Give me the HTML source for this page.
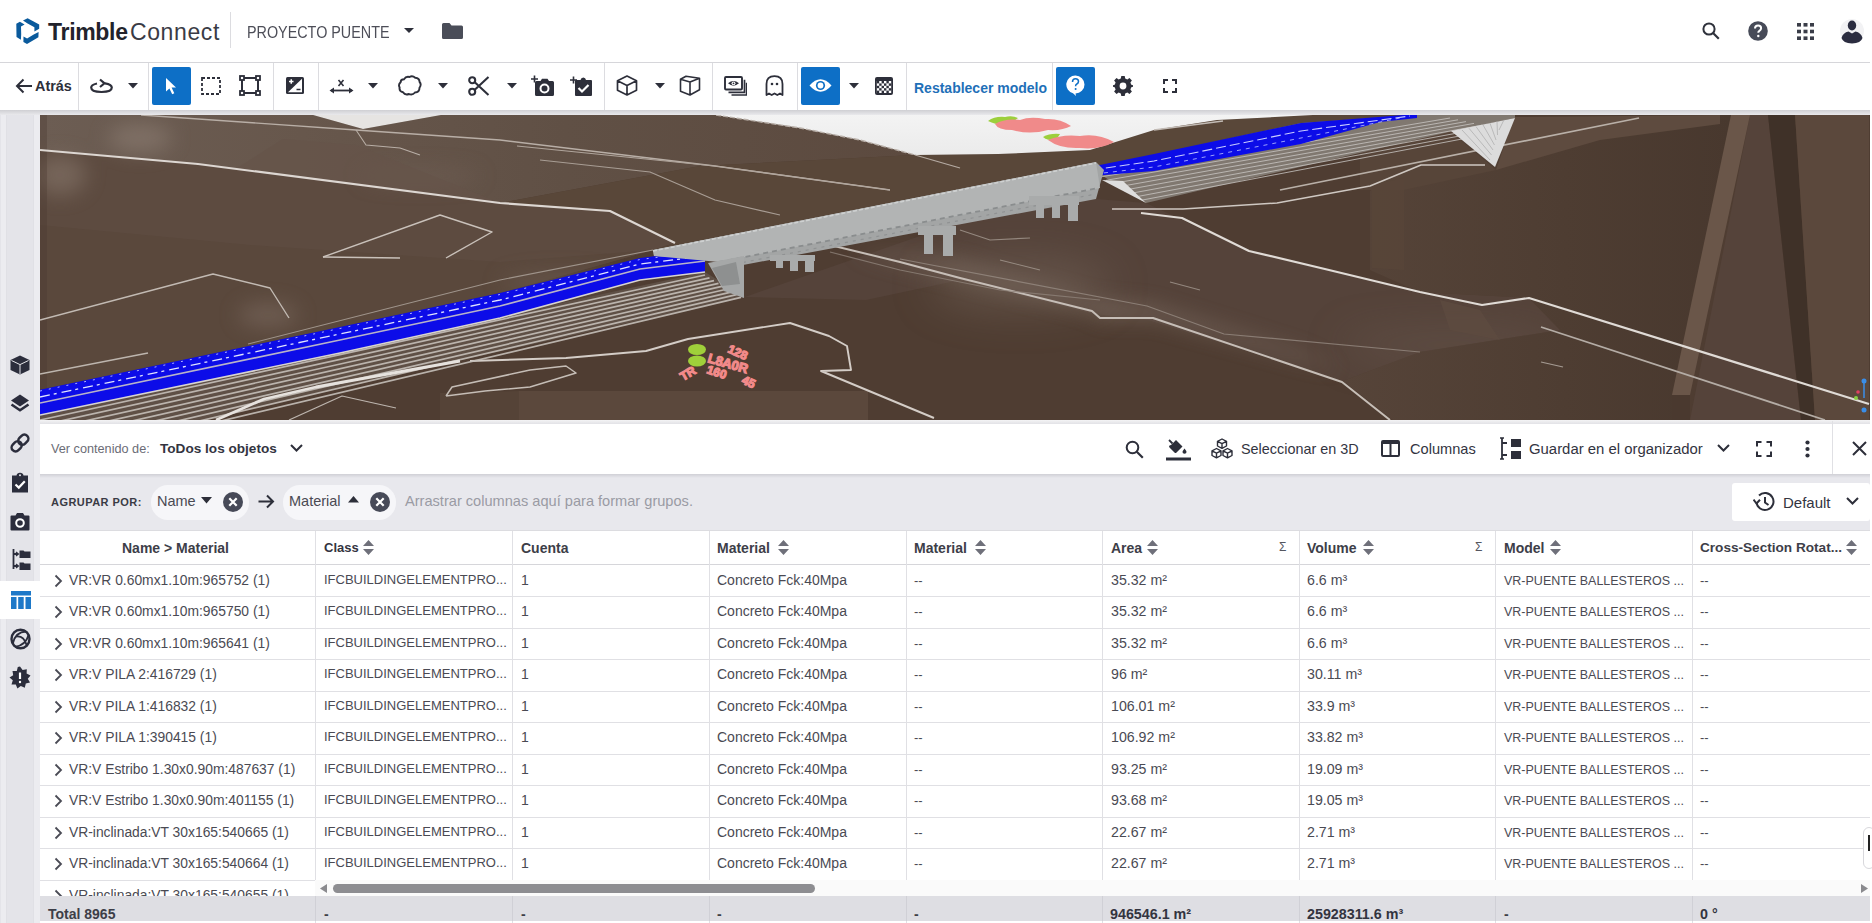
<!DOCTYPE html>
<html><head><meta charset="utf-8">
<style>
*{box-sizing:border-box;margin:0;padding:0}
html,body{width:1872px;height:923px;overflow:hidden;background:#fff;font-family:"Liberation Sans",sans-serif;color:#2b2e38}
.abs{position:absolute}
#hdr{position:absolute;left:0;top:0;width:1870px;height:63px;background:#fff;border-bottom:1px solid #d6d6da}
#tb{position:absolute;left:0;top:63px;width:1870px;height:47px;background:#fff}
#tbline{position:absolute;left:0;top:110px;width:1870px;height:5px;background:linear-gradient(#cfcfd3,#e9e9ec)}
.sep{position:absolute;top:63px;width:1px;height:47px;background:#dcdce0}
.btnA{position:absolute;top:67px;width:39px;height:38px;background:#0d6fc6;border-radius:2px}
.ic{position:absolute}
#side{position:absolute;left:0;top:115px;width:40px;height:808px;background:#e4e4e9}
#view{position:absolute;left:40px;top:115px;width:1830px;height:305px;background:#4f3e33;overflow:hidden}
#ptb{position:absolute;left:40px;top:420px;width:1830px;height:54px;background:#fff;border-top:1px solid #e2e2e6}
#grp{position:absolute;left:40px;top:474px;width:1830px;height:56px;background:#e8e8ed;border-top:1px solid #d4d4d8}
#tbl{position:absolute;left:40px;top:530px;width:1830px;height:393px;background:#fff}
.t{position:absolute;white-space:nowrap}
.hc{position:absolute;top:0;height:35px;border-right:1px solid #dedee2}
.row{position:absolute;left:0;width:1830px;border-bottom:1px solid #dcdce0}
.cell{position:absolute;font-size:13.5px;color:#3b3b45;white-space:nowrap}
</style></head>
<body>

<div id="hdr"></div>
<!-- logo -->
<svg class="ic" style="left:14px;top:17px" width="28" height="29" viewBox="0 0 28 29"><path d="M9.0 3.6 L13.6 1.2 L25.2 7.6 L25.2 11.8 L20.4 14.4 L20.4 10.3 L13.6 6.6Z M24.6 15.0 L24.4 20.2 L13.0 27.0 L9.4 24.9 L9.5 19.5 L13.1 21.5 L19.7 17.5Z M6.9 22.8 L2.5 20.0 L2.3 6.8 L5.9 4.7 L10.6 7.5 L7.0 9.6 L7.2 17.3Z" fill="#0a5a9c"/></svg>
<div class="t" style="left:48px;top:19px;font-size:23px;font-weight:bold;color:#22232c;letter-spacing:-0.3px">Trimble</div>
<div class="t" style="left:130px;top:19px;font-size:23px;color:#3a3b45;letter-spacing:0.6px">Connect</div>
<div class="abs" style="left:230px;top:12px;width:1px;height:36px;background:#dcdce0"></div>
<div class="t" style="left:247px;top:23px;font-size:16.5px;color:#4d4e58;transform:scaleX(0.87);transform-origin:0 0">PROYECTO PUENTE</div>
<svg class="ic" style="left:404px;top:28px" width="10" height="5" viewBox="0 0 10 5"><path d="M0 0H10L5 5Z" fill="#2d2f3a"/></svg>
<svg class="ic" style="left:442px;top:23px" width="21" height="16" viewBox="0 0 21 16"><path d="M0 1.5Q0 0 1.5 0H7.5L9.5 2.5H19.5Q21 2.5 21 4V14.5Q21 16 19.5 16H1.5Q0 16 0 14.5Z" fill="#4a4d58"/></svg>
<!-- right icons -->
<svg class="ic" style="left:1702px;top:22px" width="18" height="18" viewBox="0 0 18 18"><circle cx="7" cy="7" r="5.6" fill="none" stroke="#2f323c" stroke-width="2"/><path d="M11 11L16.8 16.8" stroke="#2f323c" stroke-width="2.2"/></svg>
<svg class="ic" style="left:1748px;top:21px" width="20" height="20" viewBox="0 0 20 20"><circle cx="10" cy="10" r="9.8" fill="#474b58"/><path d="M7 7.6Q7 4.6 10.1 4.6Q13.1 4.6 13.1 7.3Q13.1 9 11.2 10Q10.3 10.6 10.3 11.8" fill="none" stroke="#fff" stroke-width="2"/><circle cx="10.3" cy="15" r="1.2" fill="#fff"/></svg>
<svg class="ic" style="left:1797px;top:23px" width="17" height="17" viewBox="0 0 17 17" fill="#3a3d48"><rect x="0" y="0" width="4" height="3.6"/><rect x="6.5" y="0" width="4" height="3.6"/><rect x="13" y="0" width="4" height="3.6"/><rect x="0" y="6.7" width="4" height="3.6"/><rect x="6.5" y="6.7" width="4" height="3.6"/><rect x="13" y="6.7" width="4" height="3.6"/><rect x="0" y="13.4" width="4" height="3.6"/><rect x="6.5" y="13.4" width="4" height="3.6"/><rect x="13" y="13.4" width="4" height="3.6"/></svg>
<svg class="ic" style="left:1840px;top:18px" width="24" height="26" viewBox="0 0 24 26"><circle cx="12" cy="13" r="12" fill="#f2f2f4"/><ellipse cx="12" cy="7.5" rx="4.2" ry="5" fill="#2b2d40"/><path d="M1.5 20Q3 14.5 8.5 13.5L12 15.5L15.5 13.5Q21 14.5 22.5 20Q21 25 12 25.5Q3 25 1.5 20Z" fill="#2b2d40"/></svg>

<div id="tb"></div>
<div id="tbline"></div>
<svg class="ic" style="left:15px;top:78px" width="18" height="16" viewBox="0 0 18 16"><path d="M17 8H2.5M8.5 1.5L2 8L8.5 14.5" fill="none" stroke="#2d2f3a" stroke-width="2"/></svg>
<div class="t" style="left:35px;top:78px;font-size:14.4px;font-weight:bold;color:#2d2f3a">Atrás</div>
<div class="sep" style="left:78px"></div>
<svg class="ic" style="left:90px;top:78px" width="23" height="16" viewBox="0 0 23 16"><path d="M7 5.5Q1.2 6.8 1.2 9.6Q1.2 14 11.5 14Q21.8 14 21.8 9.6Q21.8 6.5 15 5.3" fill="none" stroke="#2d2f3a" stroke-width="2.2"/><path d="M10 1.5L14.5 5.3L10 9" fill="none" stroke="#2d2f3a" stroke-width="2.2"/></svg>
<svg class="ic" style="left:128px;top:83px" width="10" height="6" viewBox="0 0 10 6"><path d="M0 0H10L5 5.5Z" fill="#2d2f3a"/></svg>
<div class="sep" style="left:148px"></div>
<div class="btnA" style="left:152px"></div>
<svg class="ic" style="left:165px;top:77px" width="12" height="18" viewBox="0 0 12 18"><path d="M1 1V14.5L4.4 11.4L7.2 17.2L9.3 16.2L6.6 10.6H11Z" fill="#fff"/></svg>
<svg class="ic" style="left:201px;top:77px" width="20" height="18" viewBox="0 0 20 18"><rect x="1" y="1" width="18" height="16" fill="none" stroke="#2d2f3a" stroke-width="1.8" stroke-dasharray="3 2"/></svg>
<svg class="ic" style="left:239px;top:75px" width="22" height="21" viewBox="0 0 22 21"><rect x="3" y="3" width="16" height="15" fill="none" stroke="#2d2f3a" stroke-width="2"/><g fill="#fff" stroke="#2d2f3a" stroke-width="1.8"><rect x="1" y="1" width="4" height="4"/><rect x="17" y="1" width="4" height="4"/><rect x="1" y="16" width="4" height="4"/><rect x="17" y="16" width="4" height="4"/></g></svg>
<div class="sep" style="left:273px"></div>
<svg class="ic" style="left:286px;top:77px" width="18" height="17" viewBox="0 0 18 17"><rect x="0" y="0" width="18" height="17" rx="1.5" fill="#2d2f3a"/><path d="M2 15.2L16 1.8V15.2Z" fill="#fff"/><path d="M3 4.5H7.5M5.25 2.3V6.8" stroke="#fff" stroke-width="1.5"/><path d="M10.5 12.5H14.5" stroke="#2d2f3a" stroke-width="1.5"/></svg>
<div class="sep" style="left:318px"></div>
<svg class="ic" style="left:329px;top:78px" width="25" height="16" viewBox="0 0 25 16"><path d="M2 12.5H23" stroke="#2d2f3a" stroke-width="1.8"/><path d="M0.5 12.5L5 9.5V15.5Z M24.5 12.5L20 9.5V15.5Z" fill="#2d2f3a"/><path d="M9.5 2L14.5 8M14.5 2L9.5 8" stroke="#2d2f3a" stroke-width="1.6"/></svg>
<svg class="ic" style="left:368px;top:83px" width="10" height="6" viewBox="0 0 10 6"><path d="M0 0H10L5 5.5Z" fill="#2d2f3a"/></svg>
<svg class="ic" style="left:398px;top:75px" width="24" height="21" viewBox="0 0 24 21"><path d="M6 4.2Q8 1 11.5 2Q14.5 0.3 17.2 2.8Q21.5 3 21.6 7Q23.8 9.5 21.5 12.8Q21.5 17.5 17 17.5Q14.5 20.5 11 19Q7 20.5 5 17.3Q1 16.5 1.6 12.5Q0 9.5 2.6 7.2Q2.6 4.3 6 4.2Z" fill="none" stroke="#2d2f3a" stroke-width="1.9"/></svg>
<svg class="ic" style="left:438px;top:83px" width="10" height="6" viewBox="0 0 10 6"><path d="M0 0H10L5 5.5Z" fill="#2d2f3a"/></svg>
<svg class="ic" style="left:468px;top:76px" width="22" height="20" viewBox="0 0 22 20"><circle cx="4.2" cy="4.2" r="3" fill="none" stroke="#2d2f3a" stroke-width="2.1"/><circle cx="4.2" cy="15.8" r="3" fill="none" stroke="#2d2f3a" stroke-width="2.1"/><path d="M6.5 6L20.5 19M6.5 14L20.5 1" stroke="#2d2f3a" stroke-width="2.1"/></svg>
<svg class="ic" style="left:507px;top:83px" width="10" height="6" viewBox="0 0 10 6"><path d="M0 0H10L5 5.5Z" fill="#2d2f3a"/></svg>
<svg class="ic" style="left:531px;top:75px" width="23" height="21" viewBox="0 0 23 21"><path d="M4 7.5Q4 6 5.5 6H9.5L11 3.8H16.5L18 6H21.5Q23 6 23 7.5V19.5Q23 21 21.5 21H5.5Q4 21 4 19.5Z" fill="#2d2f3a"/><circle cx="13.5" cy="13.5" r="4" fill="none" stroke="#fff" stroke-width="2"/><path d="M0 4H7M3.5 0.5V7.5" stroke="#2d2f3a" stroke-width="1.6"/></svg>
<svg class="ic" style="left:570px;top:76px" width="22" height="20" viewBox="0 0 22 20"><path d="M5 5Q5 4 6 4H10.5Q11 1.5 13.3 1.5Q15.6 1.5 16 4H21Q22 4 22 5V19Q22 20 21 20H6Q5 20 5 19Z" fill="#2d2f3a"/><path d="M8.5 12L12 15.5L18.5 9" fill="none" stroke="#fff" stroke-width="2.2"/><path d="M0 4H7M3.5 0.5V7.5" stroke="#2d2f3a" stroke-width="1.6"/></svg>
<div class="sep" style="left:604px"></div>
<svg class="ic" style="left:616px;top:75px" width="22" height="21" viewBox="0 0 22 21"><path d="M11 1L20.5 5.8V15.2L11 20L1.5 15.2V5.8Z M1.5 5.8L11 10.5L20.5 5.8 M11 10.5V20" fill="none" stroke="#2d2f3a" stroke-width="1.7" stroke-linejoin="round"/></svg>
<svg class="ic" style="left:655px;top:83px" width="10" height="6" viewBox="0 0 10 6"><path d="M0 0H10L5 5.5Z" fill="#2d2f3a"/></svg>
<svg class="ic" style="left:679px;top:75px" width="22" height="21" viewBox="0 0 22 21"><path d="M7 1.2L20.5 3.2V14.8L11 20L1.5 16.2V4.2Z M1.5 4.2L11 7L20.5 3.2 M11 7V20" fill="none" stroke="#2d2f3a" stroke-width="1.6" stroke-linejoin="round"/></svg>
<div class="sep" style="left:712px"></div>
<svg class="ic" style="left:724px;top:76px" width="23" height="20" viewBox="0 0 23 20"><rect x="1" y="1" width="17" height="12.5" rx="1" fill="none" stroke="#2d2f3a" stroke-width="1.9"/><path d="M4.5 16.3H20.5V3.8" fill="none" stroke="#2d2f3a" stroke-width="1.7"/><path d="M7.5 19H22.5V6.8" fill="none" stroke="#2d2f3a" stroke-width="1.5"/><path d="M4 7.3Q9.5 2.5 15 7.3Q9.5 12 4 7.3Z" fill="#2d2f3a"/><circle cx="9.5" cy="7.3" r="1.9" fill="#fff"/><circle cx="9.5" cy="7.3" r="0.9" fill="#2d2f3a"/></svg>
<svg class="ic" style="left:765px;top:75px" width="19" height="21" viewBox="0 0 19 21"><path d="M1.5 20V9Q1.5 1.2 9.5 1.2Q17.5 1.2 17.5 9V20L15 18.5L12.3 20L9.5 18.5L6.7 20L4 18.5Z" fill="none" stroke="#2d2f3a" stroke-width="1.8" stroke-linejoin="round"/><circle cx="7" cy="9" r="1.3" fill="#2d2f3a"/><circle cx="12" cy="9" r="1.3" fill="#2d2f3a"/></svg>
<div class="sep" style="left:797px"></div>
<div class="btnA" style="left:801px"></div>
<svg class="ic" style="left:809px;top:77px" width="23" height="17" viewBox="0 0 23 17"><path d="M0.5 8.5Q11.5 -4 22.5 8.5Q11.5 21 0.5 8.5Z" fill="#fff"/><circle cx="11.5" cy="8.5" r="4.6" fill="#0d6fc6"/><circle cx="11.5" cy="8.5" r="2.9" fill="#fff"/></svg>
<svg class="ic" style="left:849px;top:83px" width="10" height="6" viewBox="0 0 10 6"><path d="M0 0H10L5 5.5Z" fill="#2d2f3a"/></svg>
<svg class="ic" style="left:875px;top:77px" width="18" height="18" viewBox="0 0 18 18"><rect x="0" y="0" width="18" height="18" rx="2" fill="#2d2f3a"/><rect x="1.8" y="4" width="14.4" height="12" fill="#fff"/><g fill="#2d2f3a"><rect x="1.8" y="4" width="2.4" height="2.4"/><rect x="6.6" y="4" width="2.4" height="2.4"/><rect x="11.4" y="4" width="2.4" height="2.4"/><rect x="4.2" y="6.4" width="2.4" height="2.4"/><rect x="9" y="6.4" width="2.4" height="2.4"/><rect x="13.8" y="6.4" width="2.4" height="2.4"/><rect x="1.8" y="8.8" width="2.4" height="2.4"/><rect x="6.6" y="8.8" width="2.4" height="2.4"/><rect x="11.4" y="8.8" width="2.4" height="2.4"/><rect x="4.2" y="11.2" width="2.4" height="2.4"/><rect x="9" y="11.2" width="2.4" height="2.4"/><rect x="13.8" y="11.2" width="2.4" height="2.4"/><rect x="1.8" y="13.6" width="2.4" height="2.4"/><rect x="6.6" y="13.6" width="2.4" height="2.4"/><rect x="11.4" y="13.6" width="2.4" height="2.4"/></g></svg>
<div class="sep" style="left:906px"></div>
<div class="t" style="left:914px;top:80px;font-size:14px;font-weight:bold;color:#1f70b8">Restablecer modelo</div>
<div class="sep" style="left:1052px"></div>
<div class="btnA" style="left:1056px"></div>
<svg class="ic" style="left:1066px;top:75px" width="19" height="21" viewBox="0 0 19 21"><path d="M9.5 0.5A9 9 0 1 1 9.5 18.5L10 21L7 18.2A9 9 0 0 1 9.5 0.5Z" fill="#fff"/><path d="M6.5 7Q6.5 3.8 9.5 3.8Q12.5 3.8 12.5 6.6Q12.5 8.3 10.6 9.2Q9.6 9.8 9.6 11.3" fill="none" stroke="#0d6fc6" stroke-width="1.5"/><circle cx="9.6" cy="14" r="1" fill="#0d6fc6"/></svg>
<svg class="ic" style="left:1113px;top:76px" width="20" height="20" viewBox="0 0 20 20"><path fill="#2d2f3a" fill-rule="evenodd" d="M8.3 0H11.7L12.2 2.6L14.3 3.5L16.5 2L18.9 4.4L17.4 6.6L18.3 8.8L20 9.2V10.8L18.3 11.2L17.4 13.4L18.9 15.6L16.5 18L14.3 16.5L12.2 17.4L11.7 20H8.3L7.8 17.4L5.7 16.5L3.5 18L1.1 15.6L2.6 13.4L1.7 11.2L0 10.8V9.2L1.7 8.8L2.6 6.6L1.1 4.4L3.5 2L5.7 3.5L7.8 2.6Z M10 6.6A3.4 3.4 0 1 0 10 13.4A3.4 3.4 0 1 0 10 6.6Z"/></svg>
<svg class="ic" style="left:1163px;top:79px" width="14" height="14" viewBox="0 0 14 14"><path d="M1 5V1H5M9 1H13V5M13 9V13H9M5 13H1V9" fill="none" stroke="#2d2f3a" stroke-width="2"/></svg>

<div id="side"></div>
<div class="abs" style="left:1px;top:115px;width:6px;height:808px;background:#ececf0;border-right:1px solid #e0e0e5"></div><div class="abs" style="left:33px;top:115px;width:7px;height:808px;background:#ececf0;border-left:1px solid #e0e0e5"></div>
<svg class="ic" style="left:10px;top:355px" width="20" height="20" viewBox="0 0 20 20"><path d="M10 0.5L19.5 5V15L10 19.5L0.5 15V5Z" fill="#2b2d3c"/><path d="M1.5 5.5L10 9.6L18.5 5.5M10 9.6V19" fill="none" stroke="#e4e4e9" stroke-width="1"/></svg>
<svg class="ic" style="left:10px;top:394px" width="20" height="20" viewBox="0 0 20 20"><path d="M10 0.5L19 6.5L10 12.5L1 6.5Z" fill="#2b2d3c"/><path d="M1.5 10.5L10 16.3L18.5 10.5" fill="none" stroke="#2b2d3c" stroke-width="2.6"/></svg>
<svg class="ic" style="left:9px;top:432px" width="22" height="22" viewBox="0 0 22 22"><g transform="rotate(-45 11 11)" fill="none" stroke="#2b2d3c" stroke-width="2.5"><rect x="0.8" y="7" width="11" height="8" rx="4"/><rect x="10.2" y="7" width="11" height="8" rx="4"/></g></svg>
<svg class="ic" style="left:11px;top:472px" width="18" height="21" viewBox="0 0 18 21"><path d="M1 3.5H5.5Q6 0.8 9 0.8Q12 0.8 12.5 3.5H17V20.5H1Z" fill="#2b2d3c"/><path d="M4.5 12.5L7.8 15.6L13.8 9.3" fill="none" stroke="#fff" stroke-width="2.2"/><circle cx="9" cy="3.3" r="1" fill="#e4e4e9"/></svg>
<svg class="ic" style="left:10px;top:512px" width="20" height="19" viewBox="0 0 20 19"><path d="M0.5 4.5Q0.5 3.5 1.5 3.5H5.5L7 1H13L14.5 3.5H18.5Q19.5 3.5 19.5 4.5V17.5Q19.5 18.5 18.5 18.5H1.5Q0.5 18.5 0.5 17.5Z" fill="#2b2d3c"/><circle cx="10" cy="11" r="3.8" fill="none" stroke="#fff" stroke-width="2"/></svg>
<svg class="ic" style="left:10px;top:548px" width="21" height="23" viewBox="0 0 21 23"><path d="M3.5 1V21M3.5 6H8M3.5 18H8" fill="none" stroke="#2b2d3c" stroke-width="1.8"/><path d="M9.5 2.5H13.5L14.5 3.5H20.5V10H9.5Z M9.5 14.5H13.5L14.5 15.5H20.5V22H9.5Z" fill="#2b2d3c"/><path d="M6 4L8.5 6L6 8M6 16L8.5 18L6 20" fill="none" stroke="#2b2d3c" stroke-width="1.2"/></svg>
<div class="abs" style="left:0;top:581px;width:40px;height:38px;background:#fff"></div>
<svg class="ic" style="left:11px;top:591px" width="20" height="18" viewBox="0 0 20 18"><rect x="0" y="0" width="20" height="4.5" fill="#1d78c8"/><rect x="0" y="6" width="5.5" height="12" fill="#1d78c8"/><rect x="7.2" y="6" width="5.5" height="12" fill="#1d78c8"/><rect x="14.5" y="6" width="5.5" height="12" fill="#1d78c8"/></svg>
<svg class="ic" style="left:10px;top:628px" width="21" height="22" viewBox="0 0 21 22"><ellipse cx="10.5" cy="11" rx="9" ry="9.3" fill="none" stroke="#2b2d3c" stroke-width="2.4"/><path d="M3 15Q5.5 4 16 3.5M5 19Q16 17 18.5 7M7 8.5Q14 8 16.5 17" fill="none" stroke="#2b2d3c" stroke-width="1.8"/></svg>
<svg class="ic" style="left:9px;top:666px" width="22" height="23" viewBox="0 0 22 23"><path d="M11 0.5L13.6 4L17.8 3.2L17.6 7.5L21.5 9.5L18.8 12.8L21 16.5L16.8 17.5L15.8 21.7L11.8 20L8.4 22.6L6.8 18.6L2.5 18.4L3.8 14.3L0.5 11.5L4.2 9.2L3.5 4.9L7.8 5L8.8 0.9Z" fill="#2b2d3c"/><path d="M11 6.5V13" stroke="#fff" stroke-width="2.2"/><circle cx="11" cy="16" r="1.2" fill="#fff"/></svg>

<div id="view"></div><!--SCENE--><svg class="abs" style="left:40px;top:115px" width="1830" height="305" viewBox="40 115 1830 305">
<defs>
<filter id="b4" x="-20%" y="-20%" width="140%" height="140%"><feGaussianBlur stdDeviation="4"/></filter>
<filter id="b10" x="-30%" y="-30%" width="160%" height="160%"><feGaussianBlur stdDeviation="10"/></filter>
<filter id="b20" x="-40%" y="-40%" width="180%" height="180%"><feGaussianBlur stdDeviation="20"/></filter>
<linearGradient id="gSky" x1="0" y1="0" x2="0" y2="1"><stop offset="0" stop-color="#f3f3f3"/><stop offset="1" stop-color="#ebebeb"/></linearGradient>
<linearGradient id="gTop" x1="0" y1="0" x2="1" y2="0"><stop offset="0" stop-color="#6c5d53"/><stop offset="0.3" stop-color="#67574c"/><stop offset="0.6" stop-color="#605045"/><stop offset="1" stop-color="#5c4a3f"/></linearGradient>
<linearGradient id="gR" x1="0" y1="0" x2="1" y2="0"><stop offset="0" stop-color="#57453a"/><stop offset="0.6" stop-color="#4e3d32"/><stop offset="1" stop-color="#48382e"/></linearGradient>
</defs>
<rect x="40" y="115" width="1830" height="305" fill="#4f3d32"/>
<polygon points="40,150 198,164 500,203 610,211 675,243 653,250 500,293 340,327 40,390" fill="#5d4b40"/>
<polygon points="40,225 250,245 500,262 653,250 500,293 340,327 40,390" fill="#5a483c"/>
<polygon points="40,115 313,115 363,129 441,115 716,115 800,128 860,140 915,155 700,166 500,203 198,164 40,150" fill="url(#gTop)"/>
<polygon points="915,155 998,154 1090,150 1154,130 1217,120 1313,115 1417,115 1090,168 653,250 675,243 610,211 500,203 700,166" fill="#594739"/>
<g filter="url(#b10)" opacity="0.6"><ellipse cx="140" cy="138" rx="32" ry="14" fill="#8e7f75"/><ellipse cx="60" cy="175" rx="26" ry="20" fill="#86766b"/><ellipse cx="268" cy="315" rx="30" ry="12" fill="#7b6b60"/><ellipse cx="560" cy="282" rx="60" ry="10" fill="#6c5c51"/><ellipse cx="420" cy="176" rx="60" ry="8" fill="#6f5f54"/></g>
<polygon points="237,168 283,139 356,145 500,203 198,164" fill="#65544a" opacity="0.6"/>
<rect x="40" y="115" width="7" height="305" fill="#4a3a30" opacity="0.35"/>
<polygon points="745,297 960,222 1096,199 1146,203 1250,252 1420,292 1529,298 1560,330 1420,352 1343,381 1148,320 1094,314 960,280 866,300" fill="#55433a"/>
<g filter="url(#b10)" opacity="0.7"><polygon points="850,250 960,262 1092,300 1153,306 1230,330 1300,352 1342,370 1153,318 1100,318 1092,311 960,278 830,245" fill="#7d6d62"/></g>
<g filter="url(#b20)" opacity="0.5"><ellipse cx="1020" cy="285" rx="90" ry="25" fill="#76665b"/><ellipse cx="1450" cy="345" rx="110" ry="12" fill="#6e5e54"/></g>
<polygon points="1313,115 1731,115 1672,420 1393,420 1343,381 1420,352 1560,330 1529,298 1420,292 1370,270 1370,191 1451,132 1515,118 1647,115" fill="url(#gR)"/>
<polygon points="1360,150 1417,115 1514,115 1450,131 1496,170 1404,190 1360,190" fill="#574539"/>
<polygon points="1496,170 1514,117 1720,115 1720,124 1600,140" fill="#5e4b3f"/>
<polygon points="1372,185 1404,178 1404,270 1372,268" fill="#584639" opacity="0.7"/>
<polygon points="1750,115 1768,115 1801,420 1690,420" fill="#55433a"/>
<polygon points="1731,115 1750,115 1690,395 1672,395" fill="#6a5649"/>
<polygon points="1672,395 1690,395 1690,420 1672,420" fill="#4a392f"/>
<polygon points="1768,115 1795,115 1815,420 1801,420" fill="#3f3128"/>
<polygon points="1795,115 1869,115 1869,420 1815,420" fill="#5b483c"/>
<polygon points="1440,300 1480,310 1500,340 1450,330" fill="#5e4b40" opacity="0.7"/>
<polygon points="519,391 868,391 868,420 519,420" fill="#5b483c"/><polygon points="440,393 519,391 519,420 440,420" fill="#554337"/>
<polygon points="716,115 800,128 860,140 915,155 998,154 1090,150 1154,130 1217,120 1313,115" fill="url(#gSky)"/>
<polygon points="313,115 363,129 441,115" fill="#e6e4e2"/>
<g><path d="M988 121 Q995 116 1005 117 Q1012 115 1018 118 L1010 124 Q998 126 988 121Z" fill="#9ccf3c"/><path d="M995 124 Q1005 118 1020 120 Q1030 116 1045 119 Q1060 118 1071 126 Q1062 131 1048 130 Q1030 135 1012 130 Q998 130 995 124Z" fill="#f08a8a"/>
<path d="M1043 137 Q1050 133 1060 134 L1056 140 Q1048 141 1043 137Z" fill="#9ccf3c"/><path d="M1048 140 Q1062 134 1080 136 Q1098 133 1114 142 Q1100 150 1080 148 Q1060 149 1048 140Z" fill="#f08a8a"/></g>
<polyline points="40,150 198,164 500,203 610,211 675,243" fill="none" stroke="#ddd7d2" stroke-width="2.2" opacity="1" stroke-linejoin="round"/>
<polyline points="141,115 356,130 500,140 715,166 890,190" fill="none" stroke="#b8aea6" stroke-width="1.4" opacity="1" stroke-linejoin="round"/>
<polyline points="517,146 715,166 890,190" fill="none" stroke="#b0a59c" stroke-width="1.2" opacity="1" stroke-linejoin="round"/>
<polyline points="540,160 650,172 715,200 780,215" fill="none" stroke="#a89d94" stroke-width="1.2" opacity="1" stroke-linejoin="round"/>
<polyline points="323,257 440,215 492,232 446,258" fill="none" stroke="#c9c1ba" stroke-width="1.4" opacity="1" stroke-linejoin="round"/>
<polyline points="323,257 400,258" fill="none" stroke="#c9c1ba" stroke-width="1.4" opacity="1" stroke-linejoin="round"/>
<polyline points="40,320 213,274 270,288 289,318" fill="none" stroke="#c2bab3" stroke-width="1.4" opacity="1" stroke-linejoin="round"/>
<polyline points="40,374 148,353" fill="none" stroke="#bdb5ae" stroke-width="1.4" opacity="1" stroke-linejoin="round"/>
<polyline points="248,344 500,280 653,250" fill="none" stroke="#9f948b" stroke-width="1.1" opacity="1" stroke-linejoin="round"/>
<polyline points="356,130 366,145 400,148 420,155" fill="none" stroke="#b8aea6" stroke-width="1.1" opacity="1" stroke-linejoin="round"/>
<polyline points="716,115 800,128 860,140 915,155" fill="none" stroke="#b9b0a9" stroke-width="1.4" opacity="1" stroke-linejoin="round" stroke-dasharray="5 2"/>
<polyline points="915,155 960,168" fill="none" stroke="#b5aba3" stroke-width="1.2" opacity="1" stroke-linejoin="round"/>
<polyline points="1154,130 1223,121" fill="none" stroke="#c2bbb5" stroke-width="1.6" opacity="1" stroke-linejoin="round"/>
<polyline points="470,361 566,358 646,351 688,339 790,323 829,336 847,346 851,370 821,371 934,418" fill="none" stroke="#d4cdc7" stroke-width="1.9" opacity="1" stroke-linejoin="round"/>
<polyline points="446,396 452,387 530,370 566,366 576,373 530,387 485,391 446,396" fill="none" stroke="#c5bdb6" stroke-width="1.5" opacity="1" stroke-linejoin="round"/>
<polyline points="289,420 342,396 396,408" fill="none" stroke="#bdb5ae" stroke-width="1.2" opacity="1" stroke-linejoin="round"/>
<polyline points="1112,209 1183,209 1277,203 1370,186 1421,165 1485,165" fill="none" stroke="#cfc8c2" stroke-width="1.6" opacity="1" stroke-linejoin="round"/>
<polyline points="1280,190 1639,118" fill="none" stroke="#b9b0a8" stroke-width="1.7" opacity="1" stroke-linejoin="round"/>
<polyline points="1141,213 1182,218 1249,251 1329,270 1420,292 1482,305 1529,298 1869,404" fill="none" stroke="#e0dbd6" stroke-width="2.2" opacity="1" stroke-linejoin="round"/>
<polyline points="830,245 900,262 960,278 1092,311 1100,318 1153,318 1342,382 1390,420" fill="none" stroke="#c6beb7" stroke-width="2" opacity="1" stroke-linejoin="round"/>
<polyline points="900,259 1147,306 1224,334 1420,352" fill="none" stroke="#9d9189" stroke-width="1.2" opacity="0.7" stroke-linejoin="round"/>
<polyline points="1541,327 1825,420" fill="none" stroke="#b4aca5" stroke-width="1.8" opacity="1" stroke-linejoin="round"/>
<polyline points="1541,362 1563,367" fill="none" stroke="#a59b93" stroke-width="1.2" opacity="1" stroke-linejoin="round"/>
<polyline points="830,252 900,270 1000,290 1100,300" fill="none" stroke="#8f8279" stroke-width="1.2" opacity="0.8" stroke-linejoin="round"/>
<polyline points="960,230 990,240 1030,238" fill="none" stroke="#a49990" stroke-width="1.2" opacity="0.8" stroke-linejoin="round"/>
<polyline points="1000,260 1040,270" fill="none" stroke="#a49990" stroke-width="1.2" opacity="0.8" stroke-linejoin="round"/>
<polyline points="1170,282 1200,290" fill="none" stroke="#a49990" stroke-width="1.2" opacity="0.8" stroke-linejoin="round"/>
<polygon points="40,415 705,272 745,297 340,387 40,462" fill="#5f5046"/>
<line x1="40" y1="420.0" x2="705.0" y2="275.0" stroke="#c5bfb9" stroke-width="1.7" opacity="0.9"/>
<line x1="40" y1="425.5" x2="709.5" y2="277.8" stroke="#c5bfb9" stroke-width="1.7" opacity="0.9"/>
<line x1="40" y1="431.0" x2="714.0" y2="280.6" stroke="#c5bfb9" stroke-width="1.7" opacity="0.9"/>
<line x1="40" y1="436.5" x2="718.5" y2="283.4" stroke="#c5bfb9" stroke-width="1.7" opacity="0.9"/>
<line x1="40" y1="442.0" x2="723.0" y2="286.2" stroke="#c5bfb9" stroke-width="1.7" opacity="0.9"/>
<line x1="40" y1="447.5" x2="727.5" y2="289.0" stroke="#c5bfb9" stroke-width="1.7" opacity="0.9"/>
<line x1="40" y1="453.0" x2="732.0" y2="291.8" stroke="#c5bfb9" stroke-width="1.7" opacity="0.9"/>
<line x1="40" y1="458.5" x2="736.5" y2="294.6" stroke="#c5bfb9" stroke-width="1.7" opacity="0.9"/>
<line x1="40" y1="464.0" x2="741.0" y2="297.4" stroke="#c5bfb9" stroke-width="1.7" opacity="0.9"/>
<polyline points="216,420 264,399 316,387 360,379 460,361" fill="none" stroke="#e6e2de" stroke-width="2.8" opacity="1" stroke-linejoin="round"/>
<polygon points="40,389.7 340,327 500,293 640,258 705,250 705,272 640,280 500,318 340,353 40,415.4" fill="#0c0ce8"/>
<polyline points="40,403 340,340 500,306 640,269 705,261" fill="none" stroke="#b9b4c8" stroke-width="1.6"/>
<polyline points="40,397 340,334 500,300 640,264 705,256" fill="none" stroke="#e0e4ff" stroke-width="1.3" stroke-dasharray="10 4 3 5"/>
<polyline points="40,415 340,353 500,318 640,280 705,272" fill="none" stroke="#d9d5d0" stroke-width="1.6"/>
<polyline points="40,391 340,328.5 500,294.5 640,259.5 705,251.5" fill="none" stroke="#aab0ff" stroke-width="1" stroke-dasharray="2 7"/>
<polygon points="1090,168 1154,155 1301,123 1417,115 1515,115 1515,118 1449,132 1146,203" fill="#807870"/>
<line x1="1100" y1="177.0" x2="1450" y2="118.0" stroke="#c9c6c3" stroke-width="1" opacity="0.8"/>
<line x1="1106" y1="180.3" x2="1458" y2="119.8" stroke="#c9c6c3" stroke-width="1" opacity="0.8"/>
<line x1="1112" y1="183.6" x2="1466" y2="121.6" stroke="#c9c6c3" stroke-width="1" opacity="0.8"/>
<line x1="1118" y1="186.9" x2="1474" y2="123.4" stroke="#c9c6c3" stroke-width="1" opacity="0.8"/>
<line x1="1124" y1="190.2" x2="1482" y2="125.2" stroke="#c9c6c3" stroke-width="1" opacity="0.8"/>
<line x1="1130" y1="193.5" x2="1490" y2="127.0" stroke="#c9c6c3" stroke-width="1" opacity="0.8"/>
<line x1="1136" y1="196.8" x2="1498" y2="128.8" stroke="#c9c6c3" stroke-width="1" opacity="0.8"/>
<line x1="1142" y1="200.1" x2="1506" y2="130.6" stroke="#c9c6c3" stroke-width="1" opacity="0.8"/>
<polygon points="1090,167 1154,154 1301,123 1417,114 1417,118 1380,122 1301,144 1154,171 1092,176" fill="#0c0ce8"/>
<polyline points="1092,170 1154,161 1301,131 1410,116" fill="none" stroke="#c8ccff" stroke-width="1.1" stroke-dasharray="10 4"/>
<polyline points="1095,174 1154,167 1301,138 1400,118" fill="none" stroke="#aab0ff" stroke-width="0.9" stroke-dasharray="4 5"/>
<polygon points="1451,131 1515,118 1495,167" fill="#dcdcdc"/>
<line x1="1462" y1="130.0" x2="1490.0" y2="160" stroke="#b0b0b0" stroke-width="0.8"/>
<line x1="1469" y1="128.3" x2="1491.5" y2="155" stroke="#b0b0b0" stroke-width="0.8"/>
<line x1="1476" y1="126.6" x2="1493.0" y2="150" stroke="#b0b0b0" stroke-width="0.8"/>
<line x1="1483" y1="124.9" x2="1494.5" y2="145" stroke="#b0b0b0" stroke-width="0.8"/>
<line x1="1490" y1="123.2" x2="1496.0" y2="140" stroke="#b0b0b0" stroke-width="0.8"/>
<line x1="1497" y1="121.5" x2="1497.5" y2="135" stroke="#b0b0b0" stroke-width="0.8"/>
<line x1="1504" y1="119.8" x2="1499.0" y2="130" stroke="#b0b0b0" stroke-width="0.8"/>
<polygon points="1102,180 1123,181 1146,203" fill="#dedede"/>
<polygon points="653,250 1096,162 1104,170 1096,199 743,265 708,259 654,256" fill="#a3a5a5"/>
<polygon points="653,250 1096,162 1100,188 719,262 654,256" fill="#b2b4b4"/>
<line x1="719" y1="262" x2="1098" y2="188" stroke="#8a8d8e" stroke-width="1.8" stroke-dasharray="5 4"/>
<line x1="653" y1="251" x2="1096" y2="163" stroke="#cfd1d1" stroke-width="1.6" stroke-dasharray="4 2"/>
<line x1="735" y1="264" x2="1096" y2="194" stroke="#909293" stroke-width="1.2" stroke-dasharray="3 5"/>
<rect x="770" y="255" width="45" height="6" fill="#a9abab"/>
<rect x="776" y="258" width="7" height="10" fill="#a9abab"/>
<rect x="790" y="258" width="8" height="13" fill="#a9abab"/>
<rect x="805" y="256" width="9" height="16" fill="#a9abab"/>
<rect x="918" y="226" width="38" height="9" fill="#a9abab"/>
<rect x="924" y="230" width="9" height="24" fill="#a9abab"/>
<rect x="943" y="228" width="10" height="28" fill="#a9abab"/>
<rect x="1029" y="196" width="50" height="9" fill="#a9abab"/>
<rect x="1036" y="202" width="8" height="16" fill="#a9abab"/>
<rect x="1052" y="200" width="8" height="18" fill="#a9abab"/>
<rect x="1068" y="198" width="10" height="23" fill="#a9abab"/>
<polygon points="708,263 744,256 744,298 724,291" fill="#a6a8a8"/>
<polygon points="712,268 736,262 740,284 722,286" fill="#8e9090"/>
<ellipse cx="697" cy="349.5" rx="9" ry="5.5" fill="#9fd03a"/><ellipse cx="697" cy="361" rx="9" ry="5.5" fill="#9fd03a"/>
<g fill="#f28a8a" stroke="#f28a8a" stroke-width="1.2" font-family="Liberation Sans" font-weight="bold"><text x="727" y="352" font-size="12" transform="rotate(24 727 352)">128</text><text x="707" y="362" font-size="13" transform="rotate(16 707 362)">L8A0R</text><text x="706" y="373" font-size="12" transform="rotate(18 706 373)">160</text><text x="741" y="383" font-size="12" transform="rotate(24 741 383)">45</text><text x="683" y="381" font-size="12" transform="rotate(-30 683 381)">TR</text></g>
<circle cx="1864" cy="381" r="2.5" fill="#3a8ee8"/><line x1="1864" y1="383" x2="1864" y2="398" stroke="#3a8ee8" stroke-width="1.5"/><circle cx="1856" cy="398" r="2" fill="#88d040"/><circle cx="1858" cy="392" r="1.8" fill="#e04060"/><circle cx="1864" cy="410" r="2.5" fill="#3a8ee8"/>
</svg><!--/SCENE-->
<div id="ptb"></div>
<div class="abs" style="left:40px;top:420px;width:1830px;height:4px;background:linear-gradient(#f4f4f5,#e2e2e6)"></div>
<div class="t" style="left:51px;top:442px;font-size:12.7px;color:#6b6c76">Ver contenido de:</div>
<div class="t" style="left:160px;top:441px;font-size:13.6px;font-weight:bold;color:#33343f">ToDos los objetos</div>
<svg class="ic" style="left:290px;top:444px" width="13" height="8" viewBox="0 0 13 8"><path d="M1 1L6.5 6.5L12 1" fill="none" stroke="#2d2f3a" stroke-width="2"/></svg>
<svg class="ic" style="left:1125px;top:440px" width="19" height="19" viewBox="0 0 19 19"><circle cx="7.5" cy="7.5" r="5.8" fill="none" stroke="#2d2f3a" stroke-width="2"/><path d="M11.8 11.8L17.8 17.8" stroke="#2d2f3a" stroke-width="2.2"/></svg>
<svg class="ic" style="left:1166px;top:438px" width="25" height="23" viewBox="0 0 25 23"><path d="M5 7L10 2L16.5 8.5L10.5 14.5Q9.5 15.5 8.5 14.5L3.5 9.5Q2.5 8.5 3.5 7.5Z" fill="#2d2f3a"/><path d="M6.5 5.5L3 2" stroke="#2d2f3a" stroke-width="1.8"/><path d="M18.5 10.5Q20.5 13 20.5 14Q20.5 15.8 18.5 15.8Q16.5 15.8 16.5 14Q16.5 13 18.5 10.5Z" fill="#2d2f3a"/><rect x="0" y="19.5" width="25" height="3" fill="#2d2f3a"/></svg>
<svg class="ic" style="left:1210px;top:438px" width="24" height="22" viewBox="0 0 24 22"><g fill="none" stroke="#2d2f3a" stroke-width="1.4" stroke-linejoin="round"><path d="M12 1L16.5 3.3V8L12 10.3L7.5 8V3.3Z M7.5 3.3L12 5.6L16.5 3.3 M12 5.6V10.3"/><path d="M6.5 10.5L11 12.8V17.5L6.5 19.8L2 17.5V12.8Z M2 12.8L6.5 15.1L11 12.8 M6.5 15.1V19.8"/><path d="M17.5 10.5L22 12.8V17.5L17.5 19.8L13 17.5V12.8Z M13 12.8L17.5 15.1L22 12.8 M17.5 15.1V19.8"/></g></svg>
<div class="t" style="left:1241px;top:441px;font-size:14.4px;color:#33343f">Seleccionar en 3D</div>
<svg class="ic" style="left:1381px;top:440px" width="19" height="17" viewBox="0 0 19 17"><rect x="1" y="1" width="17" height="15" rx="1" fill="none" stroke="#2d2f3a" stroke-width="2"/><path d="M9.5 1V16" stroke="#2d2f3a" stroke-width="2"/><path d="M1 3H18" stroke="#2d2f3a" stroke-width="2"/></svg>
<div class="t" style="left:1410px;top:441px;font-size:14.6px;color:#33343f">Columnas</div>
<svg class="ic" style="left:1499px;top:437px" width="22" height="23" viewBox="0 0 22 23"><path d="M3 1V22M3 6H8M3 18H8" fill="none" stroke="#2d2f3a" stroke-width="1.8"/><path d="M1 1H5M1 22H5" stroke="#2d2f3a" stroke-width="1.6"/><rect x="12" y="2" width="10" height="8" fill="#2d2f3a"/><rect x="12" y="14" width="10" height="8" fill="#2d2f3a"/></svg>
<div class="t" style="left:1529px;top:441px;font-size:14.9px;color:#33343f">Guardar en el organizador</div>
<svg class="ic" style="left:1717px;top:444px" width="13" height="8" viewBox="0 0 13 8"><path d="M1 1L6.5 6.5L12 1" fill="none" stroke="#2d2f3a" stroke-width="2"/></svg>
<svg class="ic" style="left:1756px;top:441px" width="16" height="16" viewBox="0 0 16 16"><path d="M1 5.5V1H5.5M10.5 1H15V5.5M15 10.5V15H10.5M5.5 15H1V10.5" fill="none" stroke="#2d2f3a" stroke-width="2"/></svg>
<svg class="ic" style="left:1805px;top:440px" width="5" height="18" viewBox="0 0 5 18"><circle cx="2.5" cy="2.5" r="2.1" fill="#2d2f3a"/><circle cx="2.5" cy="9" r="2.1" fill="#2d2f3a"/><circle cx="2.5" cy="15.5" r="2.1" fill="#2d2f3a"/></svg>
<div class="abs" style="left:1832px;top:421px;width:1px;height:53px;background:#e0e0e4"></div>
<svg class="ic" style="left:1852px;top:441px" width="15" height="15" viewBox="0 0 15 15"><path d="M1 1L14 14M14 1L1 14" stroke="#2d2f3a" stroke-width="2"/></svg>
<div id="grp"></div>
<div class="abs" style="left:40px;top:474px;width:1830px;height:4px;background:linear-gradient(#d0d0d6,#e8e8ed)"></div>
<div class="t" style="left:51px;top:496px;font-size:11px;font-weight:bold;letter-spacing:0.45px;color:#3a3b45">AGRUPAR POR:</div>
<div class="abs" style="left:151px;top:485px;width:98px;height:35px;border-radius:17px;background:#f6f6f9"></div>
<div class="t" style="left:157px;top:493px;font-size:14.5px;color:#4a4a53">Name</div>
<svg class="ic" style="left:201px;top:497px" width="11" height="7" viewBox="0 0 11 7"><path d="M0 0H11L5.5 6.5Z" fill="#2d2f3a"/></svg>
<svg class="ic" style="left:223px;top:492px" width="20" height="20" viewBox="0 0 20 20"><circle cx="10" cy="10" r="10" fill="#474a58"/><path d="M6.3 6.3L13.7 13.7M13.7 6.3L6.3 13.7" stroke="#fff" stroke-width="2.2"/></svg>
<svg class="ic" style="left:258px;top:494px" width="17" height="15" viewBox="0 0 17 15"><path d="M0.5 7.5H15M9 1.5L15 7.5L9 13.5" fill="none" stroke="#2d2f3a" stroke-width="2"/></svg>
<div class="abs" style="left:283px;top:485px;width:113px;height:35px;border-radius:17px;background:#f6f6f9"></div>
<div class="t" style="left:289px;top:493px;font-size:14.5px;color:#4a4a53">Material</div>
<svg class="ic" style="left:348px;top:496px" width="11" height="7" viewBox="0 0 11 7"><path d="M0 6.5H11L5.5 0Z" fill="#2d2f3a"/></svg>
<svg class="ic" style="left:370px;top:492px" width="20" height="20" viewBox="0 0 20 20"><circle cx="10" cy="10" r="10" fill="#474a58"/><path d="M6.3 6.3L13.7 13.7M13.7 6.3L6.3 13.7" stroke="#fff" stroke-width="2.2"/></svg>
<div class="t" style="left:405px;top:493px;font-size:14.6px;color:#9a9ba4">Arrastrar columnas aquí para formar grupos.</div>
<div class="abs" style="left:1732px;top:483px;width:138px;height:38px;border-radius:3px;background:#fff"></div>
<svg class="ic" style="left:1753px;top:491px" width="23" height="21" viewBox="0 0 23 21"><path d="M3.5 11A8.5 8.5 0 1 0 6 4.5" fill="none" stroke="#2d2f3a" stroke-width="2"/><path d="M0.5 8.5L3.5 12.5L7 8.8" fill="none" stroke="#2d2f3a" stroke-width="2"/><path d="M12 6V11.5L15.5 14" fill="none" stroke="#2d2f3a" stroke-width="2"/></svg>
<div class="t" style="left:1783px;top:494px;font-size:15px;color:#33343f">Default</div>
<svg class="ic" style="left:1846px;top:497px" width="13" height="8" viewBox="0 0 13 8"><path d="M1 1L6.5 6.5L12 1" fill="none" stroke="#2d2f3a" stroke-width="2"/></svg>
<div id="tbl"></div>
<div class="abs" style="left:40px;top:530px;width:1830px;height:1px;background:#dcdce0"></div>
<div class="abs" style="left:40px;top:564px;width:1830px;height:1px;background:#d6d6da"></div>
<div class="abs" style="left:315px;top:531px;width:1px;height:392px;background:#e0e0e4"></div>
<div class="abs" style="left:512px;top:531px;width:1px;height:392px;background:#e0e0e4"></div>
<div class="abs" style="left:709px;top:531px;width:1px;height:392px;background:#e0e0e4"></div>
<div class="abs" style="left:906px;top:531px;width:1px;height:392px;background:#e0e0e4"></div>
<div class="abs" style="left:1102px;top:531px;width:1px;height:392px;background:#e0e0e4"></div>
<div class="abs" style="left:1299px;top:531px;width:1px;height:392px;background:#e0e0e4"></div>
<div class="abs" style="left:1495px;top:531px;width:1px;height:392px;background:#e0e0e4"></div>
<div class="abs" style="left:1692px;top:531px;width:1px;height:392px;background:#e0e0e4"></div>
<div class="t" style="left:122px;top:540px;font-size:14px;font-weight:bold;color:#3d3e48">Name > Material</div>
<div class="t" style="left:324px;top:540px;font-size:13px;font-weight:bold;color:#33343f">Class</div>
<div class="t" style="left:521px;top:540px;font-size:14px;font-weight:bold;color:#3d3e48">Cuenta</div>
<div class="t" style="left:717px;top:540px;font-size:14px;font-weight:bold;color:#3d3e48">Material</div>
<div class="t" style="left:914px;top:540px;font-size:14px;font-weight:bold;color:#3d3e48">Material</div>
<div class="t" style="left:1111px;top:540px;font-size:14px;font-weight:bold;color:#3d3e48">Area</div>
<div class="t" style="left:1307px;top:540px;font-size:14px;font-weight:bold;color:#3d3e48">Volume</div>
<div class="t" style="left:1504px;top:540px;font-size:14px;font-weight:bold;color:#3d3e48">Model</div>
<div class="t" style="left:1700px;top:540px;font-size:13.6px;font-weight:bold;color:#3d3e48">Cross-Section Rotat...</div>
<svg class="ic" style="left:363px;top:540px" width="11" height="15" viewBox="0 0 11 15"><path d="M5.5 0L11 6H0Z M0 9H11L5.5 15Z" fill="#6f707a"/></svg>
<svg class="ic" style="left:778px;top:540px" width="11" height="15" viewBox="0 0 11 15"><path d="M5.5 0L11 6H0Z M0 9H11L5.5 15Z" fill="#6f707a"/></svg>
<svg class="ic" style="left:975px;top:540px" width="11" height="15" viewBox="0 0 11 15"><path d="M5.5 0L11 6H0Z M0 9H11L5.5 15Z" fill="#6f707a"/></svg>
<svg class="ic" style="left:1147px;top:540px" width="11" height="15" viewBox="0 0 11 15"><path d="M5.5 0L11 6H0Z M0 9H11L5.5 15Z" fill="#6f707a"/></svg>
<svg class="ic" style="left:1363px;top:540px" width="11" height="15" viewBox="0 0 11 15"><path d="M5.5 0L11 6H0Z M0 9H11L5.5 15Z" fill="#6f707a"/></svg>
<svg class="ic" style="left:1550px;top:540px" width="11" height="15" viewBox="0 0 11 15"><path d="M5.5 0L11 6H0Z M0 9H11L5.5 15Z" fill="#6f707a"/></svg>
<svg class="ic" style="left:1846px;top:540px" width="11" height="15" viewBox="0 0 11 15"><path d="M5.5 0L11 6H0Z M0 9H11L5.5 15Z" fill="#6f707a"/></svg>
<div class="t" style="left:1279px;top:540px;font-size:12px;color:#55565f">&Sigma;</div>
<div class="t" style="left:1475px;top:540px;font-size:12px;color:#55565f">&Sigma;</div>
<div class="abs" style="left:40px;top:596px;width:1830px;height:1px;background:#e0e0e4"></div>
<svg class="ic" style="left:54px;top:574px" width="9" height="14" viewBox="0 0 9 14"><path d="M1.5 1.5L7 7L1.5 12.5" fill="none" stroke="#4a4b55" stroke-width="1.8"/></svg>
<div class="t" style="left:69px;top:572px;font-size:13.85px;color:#4a4a53">VR:VR 0.60mx1.10m:965752 (1)</div>
<div class="t" style="left:324px;top:572px;font-size:13px;color:#4a4a53">IFCBUILDINGELEMENTPRO...</div>
<div class="t" style="left:521px;top:572px;font-size:14px;color:#4a4a53">1</div>
<div class="t" style="left:717px;top:572px;font-size:14px;color:#4a4a53">Concreto Fck:40Mpa</div>
<div class="t" style="left:914px;top:573px;font-size:13px;color:#4a4a53">--</div>
<div class="t" style="left:1111px;top:572px;font-size:14.2px;color:#4a4a53">35.32 m²</div>
<div class="t" style="left:1307px;top:572px;font-size:14.2px;color:#4a4a53">6.6 m³</div>
<div class="t" style="left:1504px;top:574px;font-size:12.5px;color:#4a4a53">VR-PUENTE BALLESTEROS ...</div>
<div class="t" style="left:1700px;top:573px;font-size:13px;color:#4a4a53">--</div>
<div class="abs" style="left:40px;top:628px;width:1830px;height:1px;background:#e0e0e4"></div>
<svg class="ic" style="left:54px;top:605px" width="9" height="14" viewBox="0 0 9 14"><path d="M1.5 1.5L7 7L1.5 12.5" fill="none" stroke="#4a4b55" stroke-width="1.8"/></svg>
<div class="t" style="left:69px;top:603px;font-size:13.85px;color:#4a4a53">VR:VR 0.60mx1.10m:965750 (1)</div>
<div class="t" style="left:324px;top:603px;font-size:13px;color:#4a4a53">IFCBUILDINGELEMENTPRO...</div>
<div class="t" style="left:521px;top:603px;font-size:14px;color:#4a4a53">1</div>
<div class="t" style="left:717px;top:603px;font-size:14px;color:#4a4a53">Concreto Fck:40Mpa</div>
<div class="t" style="left:914px;top:604px;font-size:13px;color:#4a4a53">--</div>
<div class="t" style="left:1111px;top:603px;font-size:14.2px;color:#4a4a53">35.32 m²</div>
<div class="t" style="left:1307px;top:603px;font-size:14.2px;color:#4a4a53">6.6 m³</div>
<div class="t" style="left:1504px;top:605px;font-size:12.5px;color:#4a4a53">VR-PUENTE BALLESTEROS ...</div>
<div class="t" style="left:1700px;top:604px;font-size:13px;color:#4a4a53">--</div>
<div class="abs" style="left:40px;top:659px;width:1830px;height:1px;background:#e0e0e4"></div>
<svg class="ic" style="left:54px;top:637px" width="9" height="14" viewBox="0 0 9 14"><path d="M1.5 1.5L7 7L1.5 12.5" fill="none" stroke="#4a4b55" stroke-width="1.8"/></svg>
<div class="t" style="left:69px;top:635px;font-size:13.85px;color:#4a4a53">VR:VR 0.60mx1.10m:965641 (1)</div>
<div class="t" style="left:324px;top:635px;font-size:13px;color:#4a4a53">IFCBUILDINGELEMENTPRO...</div>
<div class="t" style="left:521px;top:635px;font-size:14px;color:#4a4a53">1</div>
<div class="t" style="left:717px;top:635px;font-size:14px;color:#4a4a53">Concreto Fck:40Mpa</div>
<div class="t" style="left:914px;top:636px;font-size:13px;color:#4a4a53">--</div>
<div class="t" style="left:1111px;top:635px;font-size:14.2px;color:#4a4a53">35.32 m²</div>
<div class="t" style="left:1307px;top:635px;font-size:14.2px;color:#4a4a53">6.6 m³</div>
<div class="t" style="left:1504px;top:637px;font-size:12.5px;color:#4a4a53">VR-PUENTE BALLESTEROS ...</div>
<div class="t" style="left:1700px;top:636px;font-size:13px;color:#4a4a53">--</div>
<div class="abs" style="left:40px;top:691px;width:1830px;height:1px;background:#e0e0e4"></div>
<svg class="ic" style="left:54px;top:668px" width="9" height="14" viewBox="0 0 9 14"><path d="M1.5 1.5L7 7L1.5 12.5" fill="none" stroke="#4a4b55" stroke-width="1.8"/></svg>
<div class="t" style="left:69px;top:666px;font-size:13.85px;color:#4a4a53">VR:V PILA 2:416729 (1)</div>
<div class="t" style="left:324px;top:666px;font-size:13px;color:#4a4a53">IFCBUILDINGELEMENTPRO...</div>
<div class="t" style="left:521px;top:666px;font-size:14px;color:#4a4a53">1</div>
<div class="t" style="left:717px;top:666px;font-size:14px;color:#4a4a53">Concreto Fck:40Mpa</div>
<div class="t" style="left:914px;top:667px;font-size:13px;color:#4a4a53">--</div>
<div class="t" style="left:1111px;top:666px;font-size:14.2px;color:#4a4a53">96 m²</div>
<div class="t" style="left:1307px;top:666px;font-size:14.2px;color:#4a4a53">30.11 m³</div>
<div class="t" style="left:1504px;top:668px;font-size:12.5px;color:#4a4a53">VR-PUENTE BALLESTEROS ...</div>
<div class="t" style="left:1700px;top:667px;font-size:13px;color:#4a4a53">--</div>
<div class="abs" style="left:40px;top:722px;width:1830px;height:1px;background:#e0e0e4"></div>
<svg class="ic" style="left:54px;top:700px" width="9" height="14" viewBox="0 0 9 14"><path d="M1.5 1.5L7 7L1.5 12.5" fill="none" stroke="#4a4b55" stroke-width="1.8"/></svg>
<div class="t" style="left:69px;top:698px;font-size:13.85px;color:#4a4a53">VR:V PILA 1:416832 (1)</div>
<div class="t" style="left:324px;top:698px;font-size:13px;color:#4a4a53">IFCBUILDINGELEMENTPRO...</div>
<div class="t" style="left:521px;top:698px;font-size:14px;color:#4a4a53">1</div>
<div class="t" style="left:717px;top:698px;font-size:14px;color:#4a4a53">Concreto Fck:40Mpa</div>
<div class="t" style="left:914px;top:699px;font-size:13px;color:#4a4a53">--</div>
<div class="t" style="left:1111px;top:698px;font-size:14.2px;color:#4a4a53">106.01 m²</div>
<div class="t" style="left:1307px;top:698px;font-size:14.2px;color:#4a4a53">33.9 m³</div>
<div class="t" style="left:1504px;top:700px;font-size:12.5px;color:#4a4a53">VR-PUENTE BALLESTEROS ...</div>
<div class="t" style="left:1700px;top:699px;font-size:13px;color:#4a4a53">--</div>
<div class="abs" style="left:40px;top:754px;width:1830px;height:1px;background:#e0e0e4"></div>
<svg class="ic" style="left:54px;top:731px" width="9" height="14" viewBox="0 0 9 14"><path d="M1.5 1.5L7 7L1.5 12.5" fill="none" stroke="#4a4b55" stroke-width="1.8"/></svg>
<div class="t" style="left:69px;top:729px;font-size:13.85px;color:#4a4a53">VR:V PILA 1:390415 (1)</div>
<div class="t" style="left:324px;top:729px;font-size:13px;color:#4a4a53">IFCBUILDINGELEMENTPRO...</div>
<div class="t" style="left:521px;top:729px;font-size:14px;color:#4a4a53">1</div>
<div class="t" style="left:717px;top:729px;font-size:14px;color:#4a4a53">Concreto Fck:40Mpa</div>
<div class="t" style="left:914px;top:730px;font-size:13px;color:#4a4a53">--</div>
<div class="t" style="left:1111px;top:729px;font-size:14.2px;color:#4a4a53">106.92 m²</div>
<div class="t" style="left:1307px;top:729px;font-size:14.2px;color:#4a4a53">33.82 m³</div>
<div class="t" style="left:1504px;top:731px;font-size:12.5px;color:#4a4a53">VR-PUENTE BALLESTEROS ...</div>
<div class="t" style="left:1700px;top:730px;font-size:13px;color:#4a4a53">--</div>
<div class="abs" style="left:40px;top:785px;width:1830px;height:1px;background:#e0e0e4"></div>
<svg class="ic" style="left:54px;top:763px" width="9" height="14" viewBox="0 0 9 14"><path d="M1.5 1.5L7 7L1.5 12.5" fill="none" stroke="#4a4b55" stroke-width="1.8"/></svg>
<div class="t" style="left:69px;top:761px;font-size:13.85px;color:#4a4a53">VR:V Estribo 1.30x0.90m:487637 (1)</div>
<div class="t" style="left:324px;top:761px;font-size:13px;color:#4a4a53">IFCBUILDINGELEMENTPRO...</div>
<div class="t" style="left:521px;top:761px;font-size:14px;color:#4a4a53">1</div>
<div class="t" style="left:717px;top:761px;font-size:14px;color:#4a4a53">Concreto Fck:40Mpa</div>
<div class="t" style="left:914px;top:762px;font-size:13px;color:#4a4a53">--</div>
<div class="t" style="left:1111px;top:761px;font-size:14.2px;color:#4a4a53">93.25 m²</div>
<div class="t" style="left:1307px;top:761px;font-size:14.2px;color:#4a4a53">19.09 m³</div>
<div class="t" style="left:1504px;top:763px;font-size:12.5px;color:#4a4a53">VR-PUENTE BALLESTEROS ...</div>
<div class="t" style="left:1700px;top:762px;font-size:13px;color:#4a4a53">--</div>
<div class="abs" style="left:40px;top:817px;width:1830px;height:1px;background:#e0e0e4"></div>
<svg class="ic" style="left:54px;top:794px" width="9" height="14" viewBox="0 0 9 14"><path d="M1.5 1.5L7 7L1.5 12.5" fill="none" stroke="#4a4b55" stroke-width="1.8"/></svg>
<div class="t" style="left:69px;top:792px;font-size:13.85px;color:#4a4a53">VR:V Estribo 1.30x0.90m:401155 (1)</div>
<div class="t" style="left:324px;top:792px;font-size:13px;color:#4a4a53">IFCBUILDINGELEMENTPRO...</div>
<div class="t" style="left:521px;top:792px;font-size:14px;color:#4a4a53">1</div>
<div class="t" style="left:717px;top:792px;font-size:14px;color:#4a4a53">Concreto Fck:40Mpa</div>
<div class="t" style="left:914px;top:793px;font-size:13px;color:#4a4a53">--</div>
<div class="t" style="left:1111px;top:792px;font-size:14.2px;color:#4a4a53">93.68 m²</div>
<div class="t" style="left:1307px;top:792px;font-size:14.2px;color:#4a4a53">19.05 m³</div>
<div class="t" style="left:1504px;top:794px;font-size:12.5px;color:#4a4a53">VR-PUENTE BALLESTEROS ...</div>
<div class="t" style="left:1700px;top:793px;font-size:13px;color:#4a4a53">--</div>
<div class="abs" style="left:40px;top:848px;width:1830px;height:1px;background:#e0e0e4"></div>
<svg class="ic" style="left:54px;top:826px" width="9" height="14" viewBox="0 0 9 14"><path d="M1.5 1.5L7 7L1.5 12.5" fill="none" stroke="#4a4b55" stroke-width="1.8"/></svg>
<div class="t" style="left:69px;top:824px;font-size:13.85px;color:#4a4a53">VR-inclinada:VT 30x165:540665 (1)</div>
<div class="t" style="left:324px;top:824px;font-size:13px;color:#4a4a53">IFCBUILDINGELEMENTPRO...</div>
<div class="t" style="left:521px;top:824px;font-size:14px;color:#4a4a53">1</div>
<div class="t" style="left:717px;top:824px;font-size:14px;color:#4a4a53">Concreto Fck:40Mpa</div>
<div class="t" style="left:914px;top:825px;font-size:13px;color:#4a4a53">--</div>
<div class="t" style="left:1111px;top:824px;font-size:14.2px;color:#4a4a53">22.67 m²</div>
<div class="t" style="left:1307px;top:824px;font-size:14.2px;color:#4a4a53">2.71 m³</div>
<div class="t" style="left:1504px;top:826px;font-size:12.5px;color:#4a4a53">VR-PUENTE BALLESTEROS ...</div>
<div class="t" style="left:1700px;top:825px;font-size:13px;color:#4a4a53">--</div>
<div class="abs" style="left:40px;top:880px;width:1830px;height:1px;background:#e0e0e4"></div>
<svg class="ic" style="left:54px;top:857px" width="9" height="14" viewBox="0 0 9 14"><path d="M1.5 1.5L7 7L1.5 12.5" fill="none" stroke="#4a4b55" stroke-width="1.8"/></svg>
<div class="t" style="left:69px;top:855px;font-size:13.85px;color:#4a4a53">VR-inclinada:VT 30x165:540664 (1)</div>
<div class="t" style="left:324px;top:855px;font-size:13px;color:#4a4a53">IFCBUILDINGELEMENTPRO...</div>
<div class="t" style="left:521px;top:855px;font-size:14px;color:#4a4a53">1</div>
<div class="t" style="left:717px;top:855px;font-size:14px;color:#4a4a53">Concreto Fck:40Mpa</div>
<div class="t" style="left:914px;top:856px;font-size:13px;color:#4a4a53">--</div>
<div class="t" style="left:1111px;top:855px;font-size:14.2px;color:#4a4a53">22.67 m²</div>
<div class="t" style="left:1307px;top:855px;font-size:14.2px;color:#4a4a53">2.71 m³</div>
<div class="t" style="left:1504px;top:857px;font-size:12.5px;color:#4a4a53">VR-PUENTE BALLESTEROS ...</div>
<div class="t" style="left:1700px;top:856px;font-size:13px;color:#4a4a53">--</div>
<svg class="ic" style="left:54px;top:889px" width="9" height="14" viewBox="0 0 9 14"><path d="M1.5 1.5L7 7L1.5 12.5" fill="none" stroke="#4a4b55" stroke-width="1.8"/></svg>
<div class="t" style="left:69px;top:887px;font-size:13.85px;color:#4a4a53">VR-inclinada:VT 30x165:540655 (1)</div>
<div class="abs" style="left:315px;top:880px;width:1555px;height:16px;background:#fafafa"></div>
<svg class="ic" style="left:320px;top:884px" width="7" height="9" viewBox="0 0 7 9"><path d="M7 0V9L0 4.5Z" fill="#8a8a8e"/></svg>
<div class="abs" style="left:333px;top:884px;width:482px;height:9px;border-radius:4.5px;background:#8d8d91"></div>
<svg class="ic" style="left:1861px;top:884px" width="7" height="9" viewBox="0 0 7 9"><path d="M0 0V9L7 4.5Z" fill="#8a8a8e"/></svg>
<div class="abs" style="left:40px;top:896px;width:1830px;height:25px;background:#dedee3"></div>
<div class="abs" style="left:315px;top:896px;width:1px;height:25px;background:#d0d0d6"></div>
<div class="abs" style="left:512px;top:896px;width:1px;height:25px;background:#d0d0d6"></div>
<div class="abs" style="left:709px;top:896px;width:1px;height:25px;background:#d0d0d6"></div>
<div class="abs" style="left:906px;top:896px;width:1px;height:25px;background:#d0d0d6"></div>
<div class="abs" style="left:1102px;top:896px;width:1px;height:25px;background:#d0d0d6"></div>
<div class="abs" style="left:1299px;top:896px;width:1px;height:25px;background:#d0d0d6"></div>
<div class="abs" style="left:1495px;top:896px;width:1px;height:25px;background:#d0d0d6"></div>
<div class="abs" style="left:1692px;top:896px;width:1px;height:25px;background:#d0d0d6"></div>
<div class="t" style="left:48px;top:906px;font-size:14px;font-weight:bold;color:#3d3e48">Total 8965</div>
<div class="t" style="left:324px;top:906px;font-size:14px;font-weight:bold;color:#3d3e48">-</div>
<div class="t" style="left:521px;top:906px;font-size:14px;font-weight:bold;color:#3d3e48">-</div>
<div class="t" style="left:717px;top:906px;font-size:14px;font-weight:bold;color:#3d3e48">-</div>
<div class="t" style="left:914px;top:906px;font-size:14px;font-weight:bold;color:#3d3e48">-</div>
<div class="t" style="left:1504px;top:906px;font-size:14px;font-weight:bold;color:#3d3e48">-</div>
<div class="t" style="left:1110px;top:906px;font-size:14.3px;font-weight:bold;color:#33343f">946546.1 m²</div>
<div class="t" style="left:1307px;top:906px;font-size:14.3px;font-weight:bold;color:#33343f">25928311.6 m³</div>
<div class="t" style="left:1700px;top:906px;font-size:14.3px;font-weight:bold;color:#33343f">0 °</div>
<div class="abs" style="left:1863px;top:827px;width:12px;height:42px;border:1px solid #d8d8dc;border-radius:6px;background:#fff"></div>
<div class="abs" style="left:1868px;top:835px;width:2px;height:16px;background:#222"></div>
</body></html>
